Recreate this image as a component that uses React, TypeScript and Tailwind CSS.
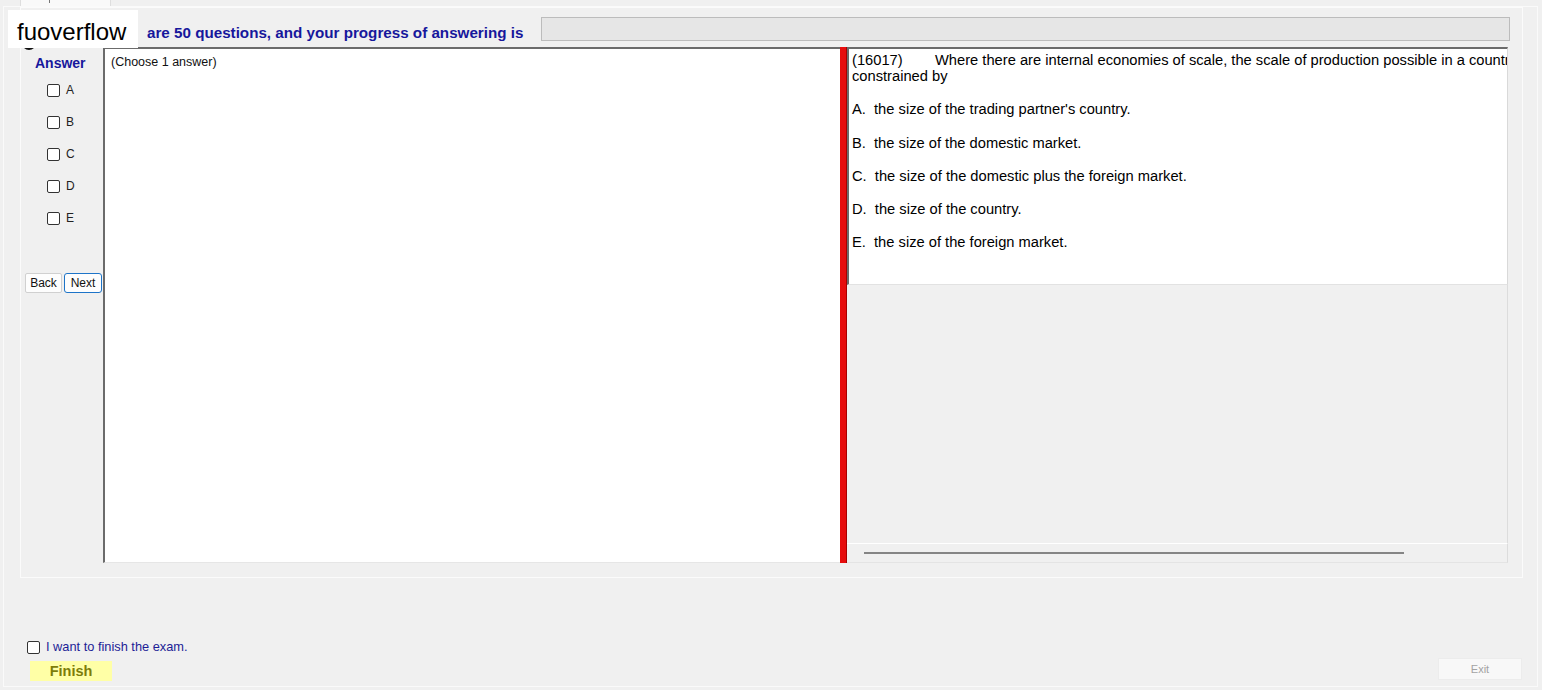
import React from 'react';

const options = [
  'A.  the size of the trading partner\'s country.',
  'B.  the size of the domestic market.',
  'C.  the size of the domestic plus the foreign market.',
  'D.  the size of the country.',
  'E.  the size of the foreign market.',
];

const optionGaps = ['mt-[17px]', 'mt-[18px]', 'mt-[17px]', 'mt-[17px]', 'mt-[17px]'];

function Box() {
  return <span className="block w-[13px] h-[13px] rounded-[2px] border border-[#333] bg-white shrink-0" />;
}

export default function App() {
  return (
    <div className="relative w-[1542px] h-[690px] overflow-hidden bg-[#f0f0f0] font-['Liberation_Sans',Arial,sans-serif] text-black">
      {/* tab strip */}
      <div className="h-[6px] flex">
        <div className="relative ml-[20px] w-[91px] h-[6px] bg-[#f9f9f9] border-x border-[#dedede]">
          <span className="absolute left-[28px] top-0 w-[1px] h-[3px] bg-[#777]" />
        </div>
      </div>

      {/* window frame */}
      <div className="ml-[3px] w-[1535px] h-[681px] border border-[#fafafa] flex flex-col">
        {/* exam group */}
        <div className="ml-[16px] w-[1503px] h-[571px] border border-[#fbfbfb] flex flex-col">
          {/* header */}
          <div className="flex items-start h-[39px] pt-[9px]">
            <div className="w-[520px] pl-[126px] mt-[7px] text-[15.2px] leading-[18px] font-bold text-[#17179c] whitespace-nowrap">
              are 50 questions, and your progress of answering is
            </div>
            <div className="w-[969px] h-[24px] bg-[#e6e6e6] border border-[#bcbcbc]" />
          </div>

          {/* body */}
          <div className="flex h-[516px]">
            {/* answer column */}
            <div className="w-[82px] flex flex-col">
              <div className="pl-[14px] pt-[8px] text-[14px] leading-[17px] font-bold text-[#17179c]">Answer</div>
              <div className="mt-[2px] flex flex-col">
                {['A', 'B', 'C', 'D', 'E'].map((l) => (
                  <div key={l} className="h-[32px] flex items-center pl-[26px] gap-[6px]">
                    <Box />
                    <span className="text-[12px] leading-[14px] text-[#222]">{l}</span>
                  </div>
                ))}
              </div>
              <div className="mt-[39px] pl-[4px] flex gap-[2px]">
                <button className="w-[37px] h-[20px] bg-[#fdfdfd] border border-[#d0d0d0] rounded-[2px] text-[12px] leading-[18px] text-[#111]">Back</button>
                <button className="w-[38px] h-[20px] bg-[#fdfdfd] border border-[#1d74c8] rounded-[3px] text-[12px] leading-[18px] text-[#111]">Next</button>
              </div>
            </div>

            {/* answer pane */}
            <div className="w-[737px] bg-white border-l-2 border-t-2 border-[#6b6b6b] border-b border-b-[#e6e6e6] pl-[6px] pt-[6px]">
              <div className="text-[12.5px] leading-[15px] text-[#111]">(Choose 1 answer)</div>
            </div>

            {/* splitter */}
            <div className="w-[7px] bg-[#e60d0d] border-r border-[#a80000]" />

            {/* question pane */}
            <div className="w-[661px] flex flex-col">
              <div className="h-[238px] bg-white border-t-2 border-l-2 border-[#6b6b6b] border-r border-r-[#d9d9d9] border-b border-b-[#e2e2e2] overflow-hidden pl-[3px] pt-[3px] text-[14.7px] leading-[16px]">
                <div className="whitespace-nowrap">
                  <span className="inline-block w-[83px]">(16017)</span>
                  Where there are internal economies of scale, the scale of production possible in a country is
                </div>
                <div>constrained by</div>
                {options.map((o, i) => (
                  <div key={o} className={`whitespace-pre ${optionGaps[i]}`}>{o}</div>
                ))}
              </div>
              <div className="flex-1 border-r border-[#dcdcdc]" />
              <div className="h-[20px] border-t border-white border-r border-r-[#dcdcdc] border-b border-b-[#e4e4e4] flex items-center pl-[17px]">
                <div className="w-[540px] h-[2px] bg-[#858585]" />
              </div>
            </div>
          </div>
        </div>

        {/* footer */}
        <div className="mt-[62px] h-[14px] pl-[23px] flex items-center gap-[6px]">
          <Box />
          <span className="text-[12.8px] leading-[14px] text-[#1d1d96]">I want to finish the exam.</span>
        </div>
        <div className="mt-[7px] flex items-start">
          <button className="ml-[26px] w-[82px] h-[20px] bg-[#ffffa6] text-[14.5px] leading-[20px] font-bold text-[#7d7d0a]">Finish</button>
          <button className="ml-auto mr-[15px] -mt-[3px] w-[84px] h-[22px] bg-[#f8f8f8] border border-[#ececec] text-[11px] leading-[20px] text-[#a3a3a3]">Exit</button>
        </div>
      </div>

      {/* watermark over header */}
      <span className="absolute left-[22px] top-[36px] w-[14px] h-[14px] rounded-full bg-[#111]" />
      <div className="absolute left-[8px] top-[10px] w-[130px] h-[38px] bg-white pl-[9px] pt-[3px] text-[24px] leading-[38px] text-black">
        fuoverflow
      </div>
    </div>
  );
}
